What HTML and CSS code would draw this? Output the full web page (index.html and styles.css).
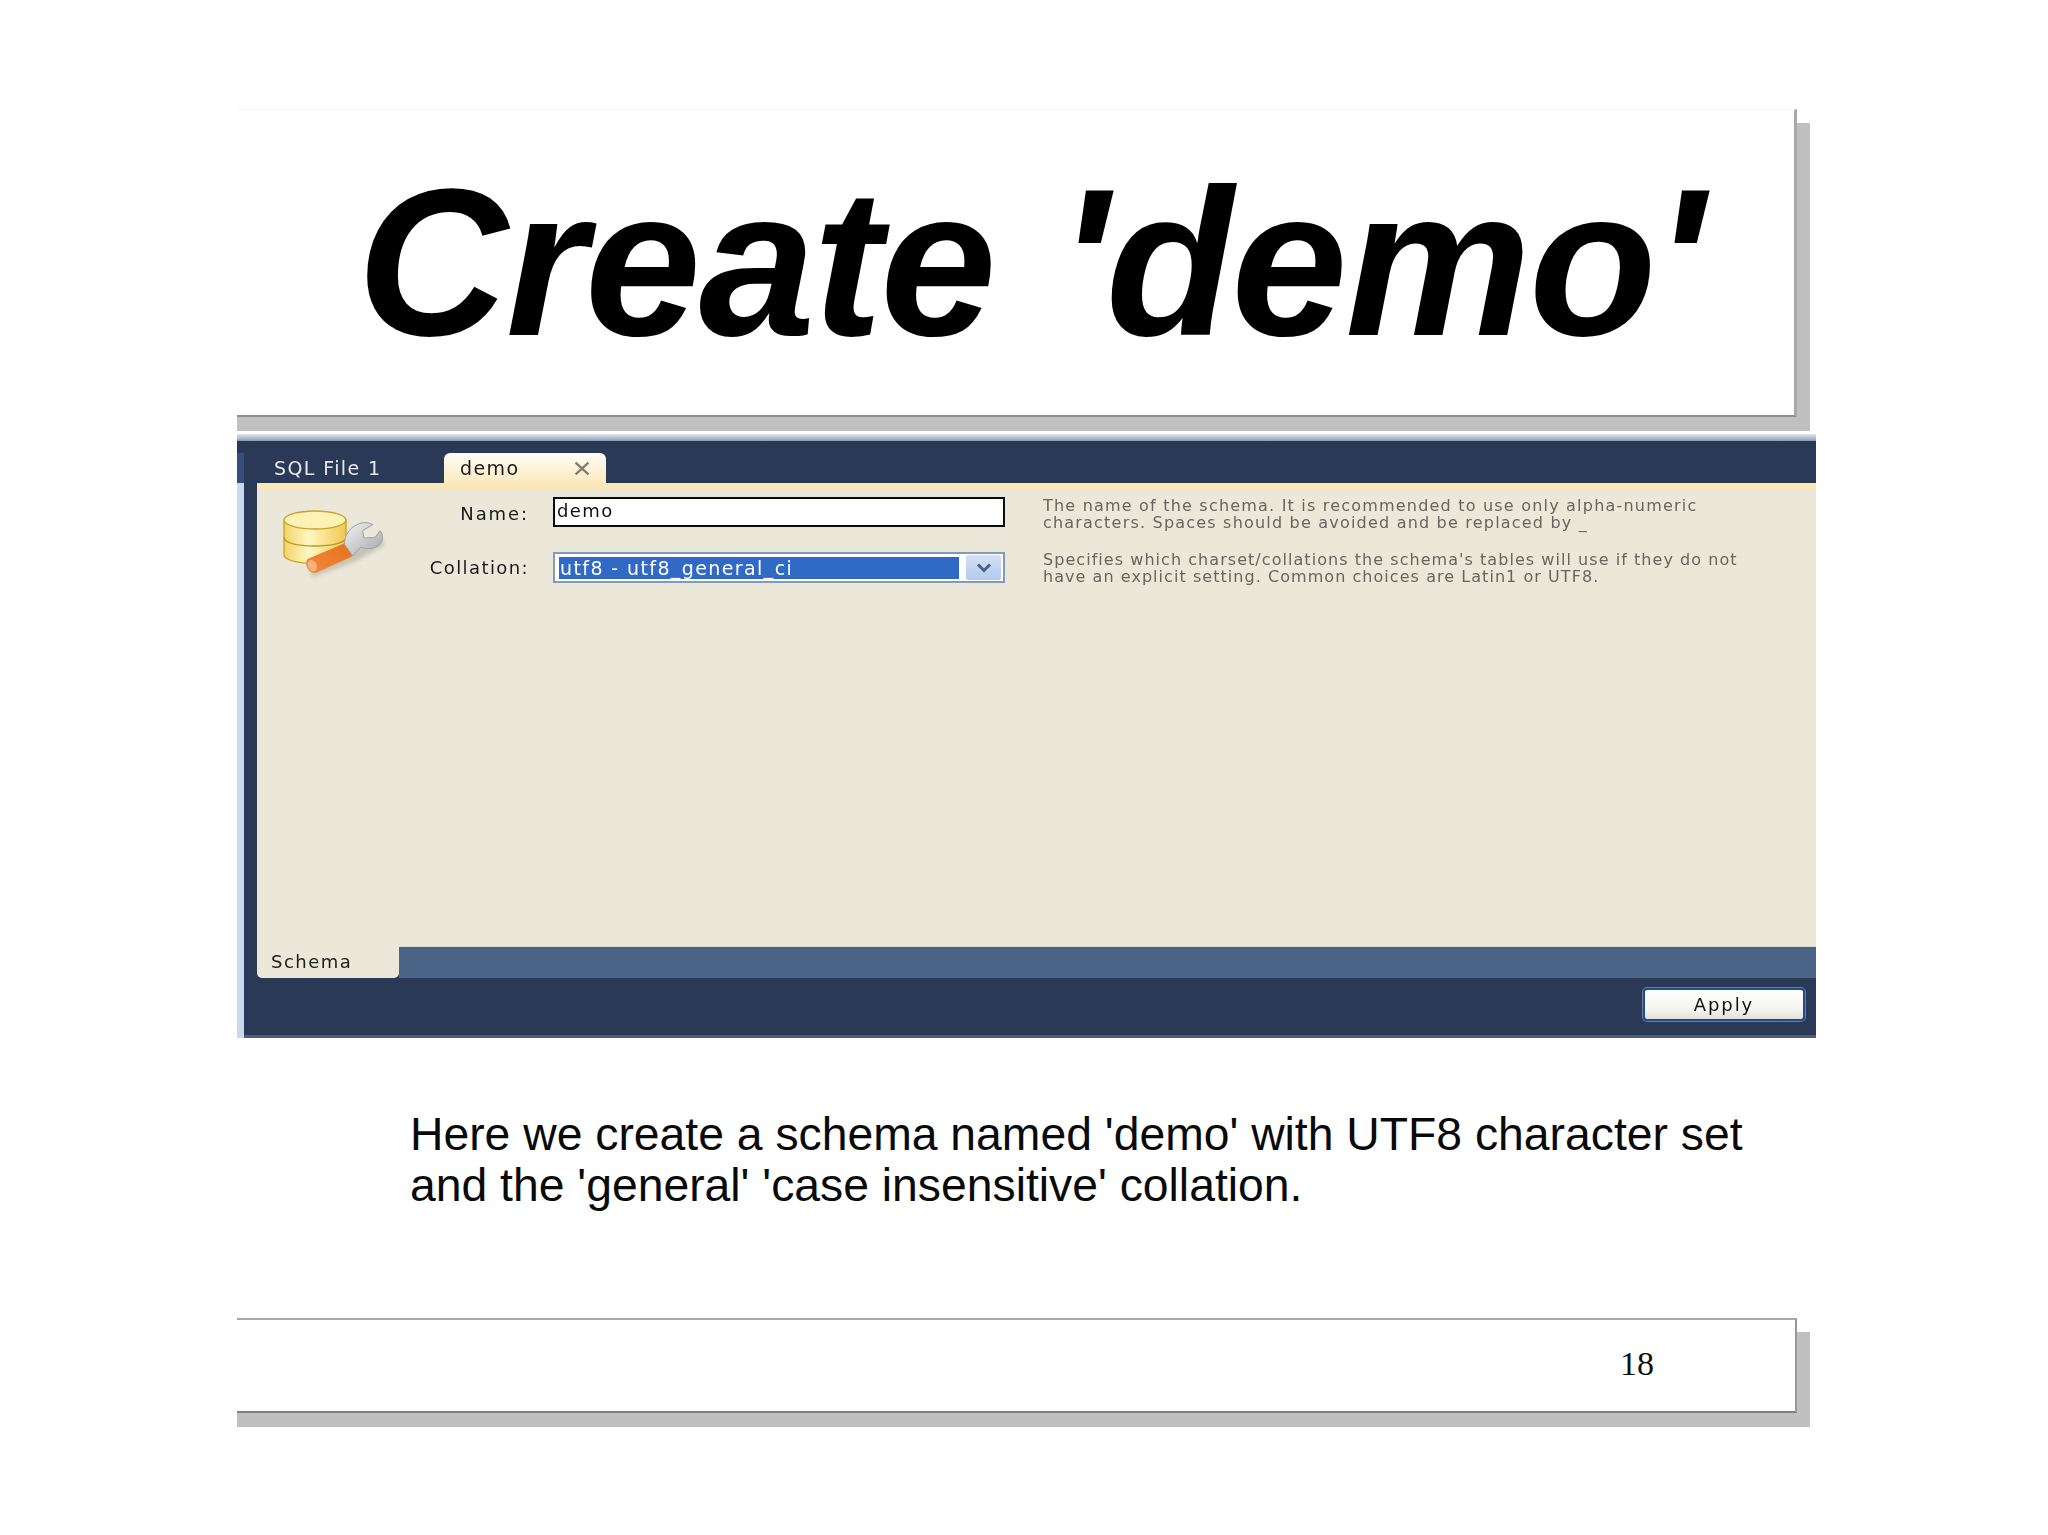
FILE: index.html
```html
<!DOCTYPE html>
<html lang="en">
<head>
<meta charset="utf-8">
<title>Create 'demo'</title>
<link rel="stylesheet" href="styles.css">
</head>
<body>
<main class="slide">
  <header class="title-box"><h1 class="title">Create 'demo'</h1></header>

  <section class="window">
    <div class="window-band"></div>
    <div class="tabs">
      <div class="tabs-edge"></div>
      <div class="tab-plain">SQL File 1</div>
      <div class="tab-active">
        <span class="tab-name">demo</span>
        <svg class="tab-close" viewBox="0 0 16 14"><path d="M2 1.5 14 12.5M14 1.5 2 12.5"/></svg>
      </div>
    </div>
    <div class="window-main">
      <div class="strip"></div>
      <div class="window-right">
        <div class="rail">
          <div class="pane">
            <div class="form">
              <svg class="db-icon" viewBox="0 0 390 270">
                <defs>
                  <linearGradient id="dbg" x1="0" x2="1" y1="0" y2="0">
                    <stop offset="0" stop-color="#f2d468"/>
                    <stop offset=".4" stop-color="#fff7c4"/>
                    <stop offset="1" stop-color="#f0c84e"/>
                  </linearGradient>
                  <linearGradient id="org" x1="0" x2="1" y1="1" y2="0">
                    <stop offset="0" stop-color="#f08a3a"/>
                    <stop offset="1" stop-color="#e8701f"/>
                  </linearGradient>
                  <linearGradient id="gry" x1="0" x2="1" y1="0" y2="1">
                    <stop offset="0" stop-color="#f2f2f2"/>
                    <stop offset="1" stop-color="#a5a5a5"/>
                  </linearGradient>
                  <filter id="soft" x="-20%" y="-20%" width="140%" height="140%">
                    <feGaussianBlur stdDeviation="7"/>
                  </filter>
                </defs>
                <path d="M125 232 255 185 345 135 330 112 240 150 120 195Z" fill="#a8a695" opacity=".55" filter="url(#soft)"/>
                <path d="M42 60V165C42 180 85 190 134 190S228 180 228 165V60Z" fill="url(#dbg)" stroke="#c9a42a" stroke-width="4"/>
                <path d="M42 112C42 130 85 138 134 138S228 130 228 112" fill="none" stroke="#b8962a" stroke-width="4"/>
                <ellipse cx="135" cy="60" rx="93" ry="27" fill="#fdf2b4" stroke="#c9a42a" stroke-width="4"/>
                <path d="M114 176 224 130C238 126 256 160 244 170L138 218C116 224 100 190 114 176Z" fill="url(#org)"/>
                <ellipse cx="127" cy="197" rx="13" ry="18" transform="rotate(-25 127 197)" fill="#f7b27a"/>
                <path d="M224 134C222 106 240 80 270 70 284 66 300 68 308 74L278 92 282 114 316 112 330 92C342 106 340 126 326 136 310 148 290 148 272 142L248 168Z" fill="url(#gry)" stroke="#a0a0a0" stroke-width="3"/>
              </svg>
              <label class="field-label label-first">Name:</label>
              <div class="input-box">demo</div>
              <p class="help help-first">The name of the schema. It is recommended to use only alpha-numeric<br>characters. Spaces should be avoided and be replaced by _</p>
              <label class="field-label">Collation:</label>
              <div class="select-box">
                <span class="select-value">utf8 - utf8_general_ci</span>
                <span class="select-btn">
                  <svg class="chevron" viewBox="0 0 16 10"><path d="M2 1.5 8 7.5 14 1.5"/></svg>
                </span>
              </div>
              <p class="help help-second">Specifies which charset/collations the schema's tables will use if they do not<br>have an explicit setting. Common choices are Latin1 or UTF8.</p>
            </div>
            <div class="subtabs">
              <div class="subtab">Schema</div>
              <div class="subtab-fill"></div>
            </div>
          </div>
        </div>
        <div class="actions">
          <button class="apply">Apply</button>
        </div>
      </div>
    </div>
  </section>

  <p class="caption">Here we create a schema named 'demo' with UTF8 character set<br>and the 'general' 'case insensitive' collation.</p>

  <footer class="footer-box"><span class="page-no">18</span></footer>
</main>
</body>
</html>
```
FILE: styles.css
```css
* { box-sizing: border-box; }
html, body { margin: 0; background: #fff; }
body { width: 2048px; height: 1535px; overflow: hidden; font-family: "Liberation Sans", Arial, sans-serif; color: #000; }

.slide { padding: 109px 0 0 237px; }

.title-box {
  width: 1560px;
  height: 308px;
  display: flex;
  align-items: center;
  padding-left: 120px;
  background: #fff;
  border-top: 1px solid #f6f6f6;
  border-right: 3px solid #a8a8a8;
  border-bottom: 2px solid #8e8e8e;
  box-shadow: 13px 14px 0 #c0c0c0, 0 14px 0 #c0c0c0;
}
.title {
  margin: 0;
  font-size: 209px;
  line-height: 1;
  font-weight: 700;
  font-style: italic;
  letter-spacing: -2.2px;
  word-spacing: 8px;
  white-space: nowrap;
}

.window {
  width: 1579px;
  height: 604px;
  margin-top: 17px;
  display: flex;
  flex-direction: column;
  font-family: "DejaVu Sans", Verdana, sans-serif;
  filter: blur(.35px);
}
.window-band { height: 7px; background: linear-gradient(#e2e7ef, #8c9cb6); flex: none; }

.tabs { height: 42px; flex: none; display: flex; align-items: flex-end; background: #2a3a56; }
.tabs-edge { width: 7px; height: 30px; background: #34507a; }
.tab-plain {
  width: 200px;
  height: 30px;
  padding-left: 30px;
  font-size: 19px;
  line-height: 30px;
  letter-spacing: 1.4px;
  color: #e4e8ee;
}
.tab-active {
  width: 162px;
  height: 30px;
  display: flex;
  align-items: center;
  justify-content: space-between;
  padding: 0 15px 0 16px;
  border-radius: 6px 6px 0 0;
  background: linear-gradient(#fffdf6, #fce9bd);
  font-size: 19px;
  letter-spacing: 1.4px;
  color: #1c1c1c;
}
.tab-close { width: 18px; height: 15px; }
.tab-close path { fill: none; stroke: #7b7b74; stroke-width: 2; }

.window-main { flex: 1; display: flex; min-height: 0; }
.strip { width: 7px; flex: none; background: #c9d8ee; }
.window-right { flex: 1; display: flex; flex-direction: column; background: #2a3a56; min-width: 0; }
.rail { flex: none; height: 495px; padding-left: 13px; }
.pane { height: 100%; display: flex; flex-direction: column; background: #ebe8d9; border-top: 6px solid #fbe6b6; }

.form {
  flex: 1;
  display: grid;
  grid-template-columns: 143px 129px 476px 1fr;
  grid-template-rows: 30px 31px;
  row-gap: 25px;
  padding-top: 8px;
  align-content: start;
}
.db-icon { grid-column: 1; grid-row: 1 / span 2; width: 130px; height: 90px; margin: 3px 0 0 13px; }
.field-label {
  justify-self: end;
  align-self: center;
  font-size: 18px;
  letter-spacing: 1.4px;
  line-height: 22px;
  color: #1a1a1a;
}
.label-first { margin-top: 4px; letter-spacing: 1.9px; }
.input-box {
  margin-left: 24px;
  border: 2px solid #0c0c0c;
  background: #fff;
  padding-left: 2px;
  font-size: 18px;
  line-height: 24px;
  letter-spacing: 1.4px;
  color: #111;
}
.select-box {
  margin-left: 24px;
  display: flex;
  align-items: center;
  gap: 7px;
  padding: 2px 2px 2px 4px;
  border: 2px solid #7f9db9;
  background: #fff;
}
.select-value {
  width: 402px;
  height: 22px;
  padding-left: 1px;
  background: #316ac5;
  color: #fff;
  font-size: 19px;
  line-height: 22px;
  letter-spacing: 1.4px;
  white-space: nowrap;
}
.select-btn {
  width: 35px;
  height: 25px;
  display: flex;
  align-items: center;
  justify-content: center;
  border-radius: 2px;
  background: linear-gradient(#d3e0f6, #b4c9ee);
}
.chevron { width: 16px; height: 10px; }
.chevron path { fill: none; stroke: #4a5f85; stroke-width: 3; }
.help {
  margin: 0 0 0 38px;
  font-size: 16px;
  line-height: 17px;
  color: #66665f;
  white-space: nowrap;
}
.help-first { letter-spacing: 1.2px; }
.help-second { letter-spacing: 1.05px; margin-top: -1px; }

.subtabs { height: 32px; flex: none; display: flex; background: #2a3a56; }
.subtab {
  width: 142px;
  padding-left: 14px;
  border-radius: 0 0 5px 5px;
  background: #ebe8d9;
  font-size: 18px;
  line-height: 32px;
  letter-spacing: 1.5px;
  color: #1c1c1c;
}
.subtab-fill { flex: 1; background: #4a6488; border-top: 1px solid #d9d9d0; }

.actions {
  flex: 1;
  display: flex;
  justify-content: flex-end;
  align-items: flex-start;
  padding: 10px 11px 0 0;
  border-bottom: 3px solid #4a6080;
}
.apply {
  width: 162px;
  height: 33px;
  padding: 0;
  border: 2px solid #1c4f86;
  border-radius: 4px;
  box-shadow: 0 0 0 1px #6a7d99;
  background: linear-gradient(#ffffff, #f4f3ee 70%, #e2e0d6);
  font-family: inherit;
  font-size: 18px;
  letter-spacing: 1.9px;
  color: #111;
}

.caption {
  margin: 71px 0 0 173px;
  font-size: 46.3px;
  line-height: 51px;
  color: #0a0a0a;
  white-space: nowrap;
}

.footer-box {
  width: 1560px;
  height: 95px;
  margin-top: 107px;
  display: flex;
  align-items: center;
  justify-content: flex-end;
  padding: 0 141px 3px 0;
  background: #fff;
  border-top: 2px solid #a8a8a8;
  border-right: 2px solid #999;
  border-bottom: 2px solid #808080;
  box-shadow: 13px 14px 0 #c0c0c0, 0 14px 0 #c0c0c0;
}
.page-no { font-family: "Liberation Serif", "Times New Roman", serif; font-size: 34px; color: #111; }
```
